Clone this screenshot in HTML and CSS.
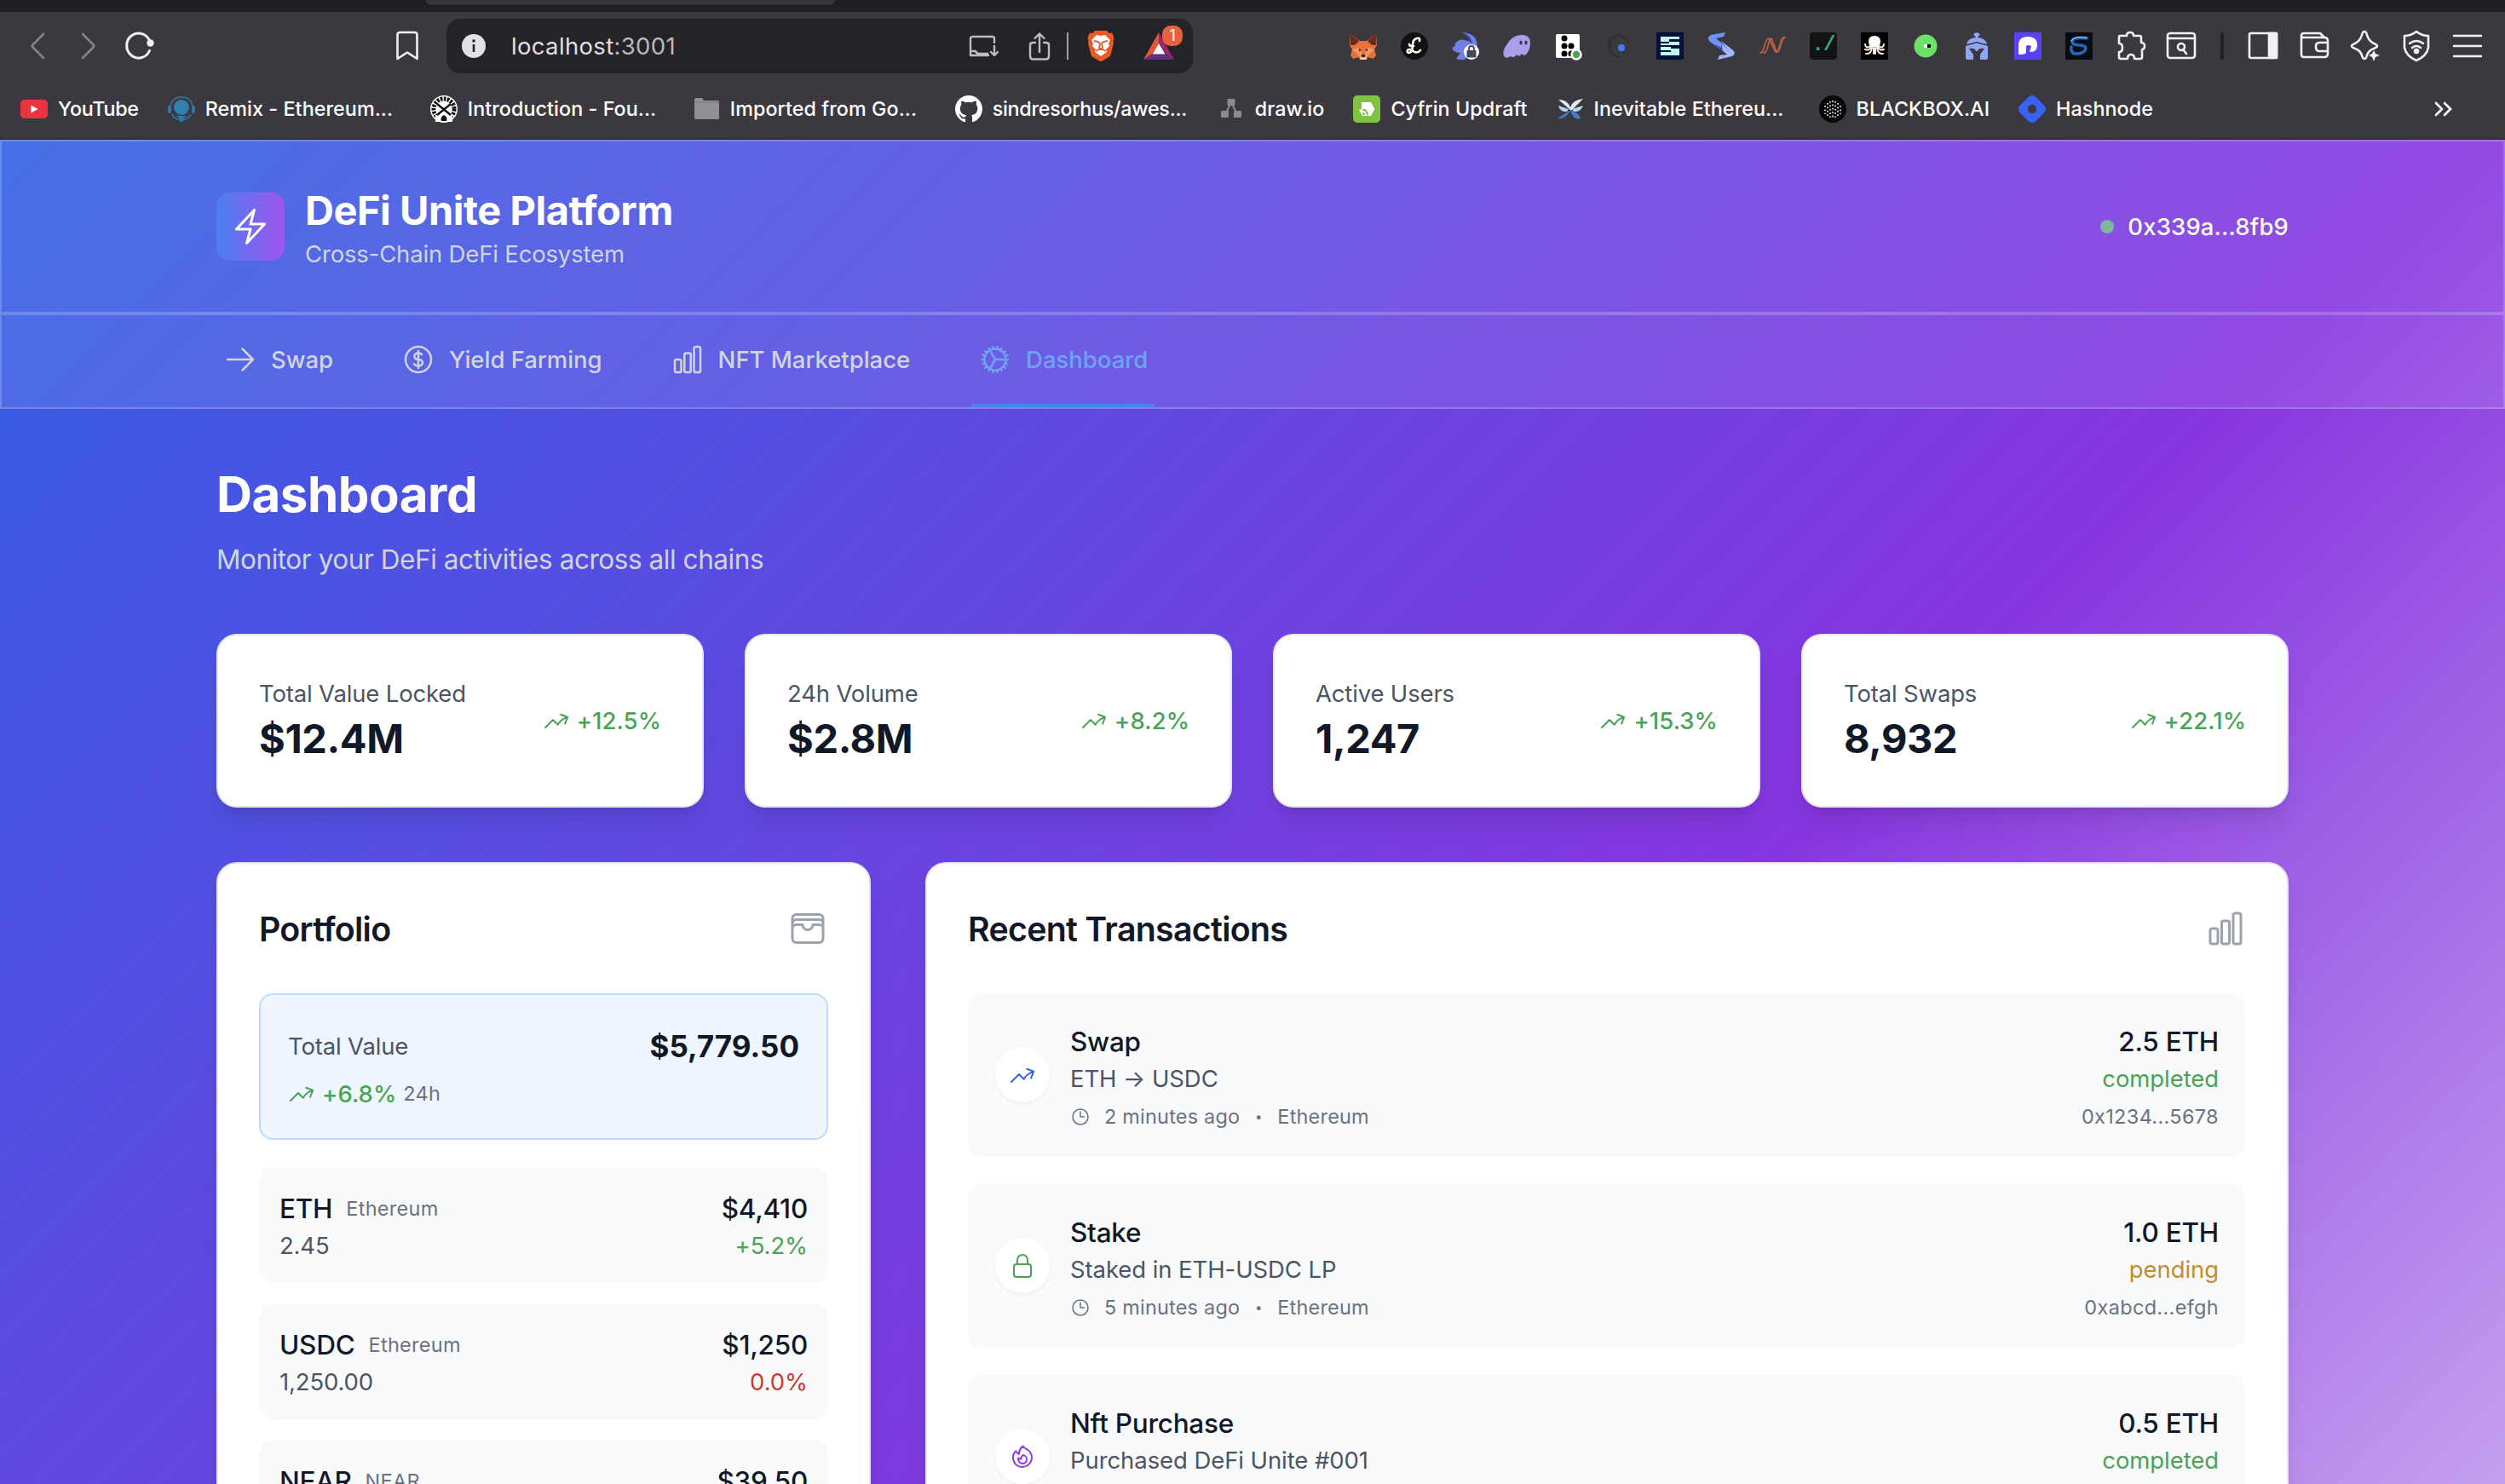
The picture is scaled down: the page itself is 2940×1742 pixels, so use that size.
FILE: index.html
```html
<!DOCTYPE html>
<html lang="en">
<head>
    <meta charset="UTF-8">
    <title>DeFi Unite Platform</title>
    <link rel="stylesheet" href="styles.css">
</head>
<body>
    <!-- shared outline icons -->
    <svg class="sprite" aria-hidden="true">
        <symbol id="i-bolt" viewBox="0 0 24 24"><path d="M3.75 13.5l10.5-11.25L12 10.5h8.25L9.75 21.75 12 13.5H3.75z"/></symbol>
        <symbol id="i-arrow" viewBox="0 0 24 24"><path d="M13.5 4.5 21 12m0 0-7.5 7.5M21 12H3"/></symbol>
        <symbol id="i-dollar" viewBox="0 0 24 24"><path d="M12 6v12m-3-2.818.879.659c1.171.879 3.07.879 4.242 0 1.172-.879 1.172-2.303 0-3.182C13.536 12.219 12.768 12 12 12c-.725 0-1.45-.22-2.003-.659-1.106-.879-1.106-2.303 0-3.182s2.9-.879 4.006 0l.415.33M21 12a9 9 0 1 1-18 0 9 9 0 0 1 18 0Z"/></symbol>
        <symbol id="i-chart" viewBox="0 0 24 24"><path d="M3 13.125C3 12.504 3.504 12 4.125 12h2.25c.621 0 1.125.504 1.125 1.125v6.75C7.5 20.496 6.996 21 6.375 21h-2.25A1.125 1.125 0 0 1 3 19.875v-6.75ZM9.75 8.625c0-.621.504-1.125 1.125-1.125h2.25c.621 0 1.125.504 1.125 1.125v11.25c0 .621-.504 1.125-1.125 1.125h-2.25a1.125 1.125 0 0 1-1.125-1.125V8.625ZM16.5 4.125c0-.621.504-1.125 1.125-1.125h2.25C20.496 3 21 3.504 21 4.125v15.75c0 .621-.504 1.125-1.125 1.125h-2.25a1.125 1.125 0 0 1-1.125-1.125V4.125Z"/></symbol>
        <symbol id="i-cog" viewBox="0 0 24 24"><path d="M4.5 12a7.5 7.5 0 0 0 15 0m-15 0a7.5 7.5 0 1 1 15 0m-15 0H3m16.5 0H21m-1.5 0H12m-8.457 3.077 1.41-.513m14.095-5.13 1.41-.513M5.106 17.785l1.15-.964m11.49-9.642 1.149-.964M7.501 19.795l.75-1.3m7.5-12.99.75-1.3m-6.063 16.658.26-1.477m2.605-14.772.26-1.477m0 17.726-.26-1.477M10.698 4.614l-.26-1.477M16.5 19.794l-.75-1.299M7.5 4.205 12 12m6.894 5.785-1.149-.964M6.256 7.178l-1.15-.964m15.352 8.864-1.41-.513M4.954 9.435l-1.41-.514M12.002 12l-3.75 6.495"/></symbol>
        <symbol id="i-trend" viewBox="0 0 24 24"><path d="M2.25 18 9 11.25l4.306 4.306a11.95 11.95 0 0 1 5.814-5.518l2.74-1.22m0 0-5.94-2.281m5.94 2.28-2.28 5.941"/></symbol>
        <symbol id="i-wallet" viewBox="0 0 24 24"><path d="M21 12a2.25 2.25 0 0 0-2.25-2.25H15a3 3 0 1 1-6 0H5.25A2.25 2.25 0 0 0 3 12m18 0v6a2.25 2.25 0 0 1-2.25 2.25H5.25A2.25 2.25 0 0 1 3 18v-6m18 0V9M3 12V9m18 0a2.25 2.25 0 0 0-2.25-2.25H5.25A2.25 2.25 0 0 0 3 9m18 0V6a2.25 2.25 0 0 0-2.25-2.25H5.25A2.25 2.25 0 0 0 3 6v3"/></symbol>
        <symbol id="i-clock" viewBox="0 0 24 24"><path d="M12 6v6h4.5m4.5 0a9 9 0 1 1-18 0 9 9 0 0 1 18 0Z"/></symbol>
        <symbol id="i-lock" viewBox="0 0 24 24"><path d="M16.5 10.5V6.75a4.5 4.5 0 1 0-9 0v3.75m-.75 11.25h10.5a2.25 2.25 0 0 0 2.25-2.25v-6.75a2.25 2.25 0 0 0-2.25-2.25H6.75a2.25 2.25 0 0 0-2.25 2.25v6.75a2.25 2.25 0 0 0 2.25 2.25Z"/></symbol>
        <symbol id="i-fire" viewBox="0 0 24 24"><path d="M15.362 5.214A8.252 8.252 0 0 1 12 21 8.25 8.25 0 0 1 6.038 7.047 8.287 8.287 0 0 0 9 9.601a8.983 8.983 0 0 1 3.361-6.867 8.21 8.21 0 0 0 3 2.48Z"/><path d="M12 18a3.75 3.75 0 0 0 .495-7.468 5.99 5.99 0 0 0-1.925 3.547 5.975 5.975 0 0 1-2.133-1.001A3.75 3.75 0 0 0 12 18Z"/></symbol>
    </svg>

    <!-- browser chrome -->
    <div class="browser">
        <div class="tab-strip"><div class="tab-stub"></div></div>
        <div class="toolbar">
            <div class="tool dim"><svg viewBox="0 0 32 32"><path d="M23 2 10.5 14.5q-1.5 1.5 0 3L23 30"/></svg></div>
            <div class="tool dim"><svg viewBox="0 0 32 32"><path d="M9 2l12.500 12.500q1.500 1.500 0 3L9 30"/></svg></div>
            <div class="tool"><svg viewBox="0 0 32 32"><path d="M27.500 21.500A14 14.500 0 1 1 28 11" stroke-width="3"/><circle cx="28.500" cy="12.500" r="4.200" fill="#f1f0f4" stroke="none"/></svg></div>
            <div class="tool save"><svg viewBox="0 0 32 32"><path d="M4.500 3q0-3 3-3h17q3 0 3 3v28L16 23.500 4.500 31Z"/></svg></div>
            <div class="url">
                <svg class="info" viewBox="0 0 28 28"><circle cx="14" cy="14" r="14" fill="#e3e1e8"/><circle cx="14" cy="8" r="1.800" fill="#242328"/><path d="M14 12v9" stroke="#242328" stroke-width="2.600"/></svg>
                <span class="address">localhost<span class="port">:3001</span></span>
                <svg class="url-icon" viewBox="0 0 36 36"><path d="M31 14V9.500Q31 7 28.500 7H6Q3 7 3 9.500V29h21M3 24h6q1 3 4 3h10M31 18v10.500M27 25l4 4 4-4"/></svg>
                <svg class="url-icon share" viewBox="0 0 32 36"><path d="M11 14H8.500Q5 14 5 17v13q0 3.500 3.500 3.500h15Q27 33.500 27 30V17q0-3-3.500-3H21M16 25V4M10.500 9 16 3.500 21.500 9"/></svg>
                <span class="url-sep"></span>
                <svg class="lion" viewBox="0 0 32 36"><path d="M9 0h14l3 3 3-.5L31.500 8l-1 4 .5 3-4 15-11 6.500L5 30 1 15l.5-3-1-4L3 2.500 6 3Z" fill="#ea5a24"/><path d="M16 6l5-1 6 6-2 4 1 3-4 4 1 3-7 5-7-5 1-3-4-4 1-3-2-4 6-6Z" fill="#fff"/><path d="M8 12l5 1 2 2-1 5 2 2 2-2-1-5 2-2 5-1M10 24l6-3 6 3" fill="none" stroke="#ea5a24" stroke-width="1.800"/></svg>
                <div class="bat">
                    <svg viewBox="0 0 36 32"><path d="M18 0 0 32l10-6.500L18 13Z" fill="#ee5330"/><path d="M18 0l18 32-10-6.500L18 13Z" fill="#99286a"/><path d="M0 32l10-6.500h16L36 32Z" fill="#5f3088"/><path d="M18 13l7.500 12.500h-15Z" fill="#fff"/></svg>
                    <span class="badge">1</span>
                </div>
            </div>

            <div class="extensions">
                <div class="tool"><svg viewBox="0 0 32 32" class="fill"><path d="M1 2l11 8h8L31 2l1 13-3 5 2 7-3 4-7-2-3 3h-4l-3-3-7 2-3-4 2-7-3-5Z" fill="#e8703a"/><path d="M1 2l10 8-5 5-5 0ZM31 2 21 10l5 5 5 0Z" fill="#6b2a1c"/><path d="M3 20l8-2 5 10 5-10 8 2-7 6-2 6h-8l-2-6Z" fill="#f5955f"/><path d="M11 19l3 2-3 1ZM21 19l-3 2 3 1ZM13.500 26h5l-1 3h-3Z" fill="#26272d"/><path d="M12 29l2 3h4l2-3-2 1h-4Z" fill="#ece4df"/></svg></div>
                <div class="tool"><svg viewBox="0 0 32 32" class="fill"><circle cx="16" cy="16" r="16" fill="#121110"/><path d="M22 10q1-4-3-3-5 1-5 8 0 8-4 9-3 0-2-3 2-2 5 0 6 5 10 0M10 14q1 3 5 2" fill="none" stroke="#fff" stroke-width="2.600"/></svg></div>
                <div class="tool"><svg viewBox="0 0 32 32" class="fill"><path d="M12 0q18 1 18 17l-9 5q-1 7-7 10-7 0-9-1l5-7Q2 24 0 18q4-1 4-5 5-8 17-2-1-6-9-11Z" fill="#717fe8"/><path d="M12 0q10 3 12 13l-3-2q-1-6-9-11Z" fill="#4434ac"/><circle cx="23" cy="23" r="9" fill="#fff"/><rect x="17.500" y="21" width="11" height="8.500" rx="1" fill="#41485e"/><path d="M20 21v-2q0-3 3-3t3 3v2" fill="none" stroke="#41485e" stroke-width="1.800"/></svg></div>
                <div class="tool"><svg viewBox="0 0 32 32" class="fill"><path d="M2 29q-4-5 2-14Q11 3 22 3q10 0 10 9 0 9-5 14-3 2-5-1-3 5-6 1-3 5-7 2-4 3-7 1Z" fill="#ab9fec"/><ellipse cx="21" cy="12" rx="1.600" ry="2.600" fill="#3a383e"/><ellipse cx="27" cy="12" rx="1.600" ry="2.600" fill="#3a383e"/></svg></div>
                <div class="tool"><svg viewBox="0 0 32 32" class="fill"><rect x="2" y="2" width="28" height="28" rx="2" fill="#fff"/><g fill="#000"><circle cx="12" cy="7" r="3.500"/><circle cx="12" cy="16" r="3.500"/><circle cx="20" cy="16" r="3.500"/><circle cx="12" cy="25" r="3.500"/><circle cx="20" cy="25" r="3.500"/></g><circle cx="26" cy="26" r="5.500" fill="#4ca154" stroke="#fff"/></svg></div>
                <div class="tool"><svg viewBox="0 0 32 32" class="fill"><path d="M27 9 16 3 5 9v14l11 6" fill="none" stroke="#2f2e33" stroke-width="3" stroke-dasharray="8 2"/><circle cx="19" cy="18" r="4.200" fill="#3f7bf2"/></svg></div>
                <div class="tool"><svg viewBox="0 0 32 32" class="fill"><path d="M0 0h32v32H0Z" fill="#03103a"/><path d="M5 5h22v3H15v3h12v4H5ZM5 17h22v10H5v-4h12v-2H5Z" fill="#bdf8f3"/><path d="M5 11h10v2H5ZM17 17h10v2H17Z" fill="#03103a"/></svg></div>
                <div class="tool"><svg viewBox="0 0 32 32" class="fill"><path d="M21 0 4 3Q-2 6 3 11l15 11L16 12l-6-5 9-2Z" fill="#6f94f4"/><path d="M12 32l17-4q5-3 1-7L16 10v10l7 6-9 1Z" fill="#a2b7f8"/><path d="M7 13l11 9L16 12l8 8-8-10v8Z" fill="#2746e6"/></svg></div>
                <div class="tool"><svg viewBox="0 0 32 32" class="fill"><path d="M2 24q3 0 5-8t5-9l8 16q3 1 5-8t5-9M6 24q3 0 5-8t4-9l6 16q3 0 5-8t5-9" fill="none" stroke="#b95f44" stroke-width="1.800"/></svg></div>
                <div class="tool"><span class="slash">./</span></div>
                <div class="tool"><svg viewBox="0 0 32 32" class="fill"><path d="M0 0h32v32H0Z" fill="#000"/><path d="M16 4q7 0 7 7 0 3-2 6H11q-2-3-2-6 0-7 7-7Z" fill="#fff"/><path d="M11 16q-5 4-6-2M21 16q5 4 6-2M12 17q-2 5-7 3M20 17q2 5 7 3M13 18q-1 8-7 7M19 18q1 8 7 7M15 18v7M17 18v7" fill="none" stroke="#fff3ec" stroke-width="2"/></svg></div>
                <div class="tool"><svg viewBox="0 0 32 32" class="fill"><circle cx="16" cy="16" r="13.500" fill="#6fe069"/><path d="M14 14h4v4h-4Z" fill="#fff"/><path d="M18 14h4v4h-4Z" fill="#000"/></svg></div>
                <div class="tool"><svg viewBox="0 0 32 32" class="fill"><path d="M12 2l4-2 4 2-3 4h-2Z" fill="#8ea6f8"/><path d="M4 14Q6 6 16 6t12 8L16 11Z" fill="#8ea6f8"/><path d="M3 16l13-3.500L29 16v14q0 2-3 2h-6V26l5-7q-7-1-8 3h-2q-1-4-8-3l5 7v6H6q-3 0-3-2Z" fill="#8ea6f8"/></svg></div>
                <div class="tool"><svg viewBox="0 0 32 32" class="fill"><path d="M0 0h32v32H0Z" fill="#5842f8"/><path d="M5 26V15Q5 5 16 5t11 10q0 8-8 8h-1l2-7q-7-3-6 3v5q-1 2-9 2Z" fill="#fff"/></svg></div>
                <div class="tool"><svg viewBox="0 0 32 32" class="fill"><path d="M0 0h32v32H0Z" fill="#080b12"/><path d="M25 7Q10 5 8 10q0 5 8 5t8 4q-2 7-14 6-4-3-3-8" fill="none" stroke="#2268b4" stroke-width="3.600"/><path d="M25 6Q10 4 7 10" fill="none" stroke="#7bbcf6" stroke-width="1.500"/></svg></div>
                <div class="tool"><svg viewBox="0 0 32 32" class="big"><path d="M4 4h8q0-4 4-4t4 4h7q2 0 2 2v6q4 0 4 4t-3 4v9q0 2-2 2h-7q0-5-4-5t-4 5H5q-2 0-2-2v-6q4 0 4-5t-4-5V6q0-2 1-2Z"/></svg></div>
                <div class="tool"><svg viewBox="0 0 32 32"><rect x="0" y="1" width="32" height="29" rx="3"/><path d="M0 7h32M18 20l4 5"/><circle cx="16" cy="17" r="4"/></svg></div>
            </div>
            <span class="tool-sep"></span>
            <div class="system">
                <div class="tool"><svg viewBox="0 0 32 32"><rect x="0" y="1" width="32" height="29" rx="2"/><path d="M23 1h9v29h-9Z" fill="#f1f0f4"/></svg></div>
                <div class="tool"><svg viewBox="0 0 32 32"><path d="M1 4q0-3 3-3h19l5 5M1 4q0 2 3 2h24q4 0 4 4v15q0 4-4 4H4q-3 0-3-3ZM32 12H22q-4 0-4 5t4 5h10"/></svg></div>
                <div class="tool"><svg viewBox="0 0 32 32" class="big"><path d="M15-1q2 0 3 4 2 7 8 10 4 1.500 4 3t-4 3q-6 2-8 8-1 4-3 4t-3-4q-2-6-8-8-4-1.500-4-3t4-3q6-3 8-10 1-4 3-4Z"/><path d="M26 21l2 4 5 2-5 2-2 5-2-5-4-2 4-2Z" fill="#f1f0f4" stroke="none"/></svg></div>
                <div class="tool"><svg viewBox="0 0 32 32"><path d="M16-1q6 5 14 5v14q-2 10-14 15Q4 28 2 18V4q8 0 14-5Z"/><path d="M8 13q8-6 16 0M11 18q5-4 10 0"/><circle cx="16" cy="22" r="2" fill="#f1f0f4"/></svg></div>
                <div class="tool"><svg viewBox="0 0 32 32"><path d="M0 4h32M0 16h32M0 28h32"/></svg></div>
            </div>
        </div>

        <div class="bookmarks">
            <div class="bookmark tight"><svg viewBox="0 0 32 32"><rect y="5" width="32" height="22" rx="5" fill="#ea3440"/><path d="M12.500 11.500v9l8-4.500Z" fill="#fff"/></svg>YouTube</div>
            <div class="bookmark wide"><svg viewBox="0 0 32 32"><path d="M16 28l-7-4h14ZM16 32l-5-5h10Z" fill="#2d79a8"/><path d="M3 14Q4 2 16 2t13 12" fill="none" stroke="#2d79a8" stroke-width="1.600"/><rect x="0" y="12" width="4" height="9" rx="2" fill="#2d79a8"/><rect x="28" y="12" width="4" height="9" rx="2" fill="#2d79a8"/><path d="M5 22q2 5 7 6M27 22q-2 5-7 6" fill="none" stroke="#2d79a8" stroke-width="1.600"/><circle cx="16" cy="14" r="9" fill="#357fae"/></svg>Remix - Ethereum...</div>
            <div class="bookmark wide"><svg viewBox="0 0 32 32"><circle cx="16" cy="16" r="16" fill="#fff"/><circle cx="16" cy="16" r="12" fill="none" stroke="#111" stroke-width="5" stroke-dasharray="2.600 1.400"/><path d="M6 23h20v8H6Z" fill="#fff"/><circle cx="16" cy="17" r="9.500" fill="#fff"/><path d="M8 10l16 13M24 10 8 23" stroke="#111" stroke-width="2.400"/><path d="M13 30q-2-4 3-7 5 3 3 7Z" fill="#111"/></svg>Introduction - Fou...</div>
            <div class="bookmark wide"><svg viewBox="0 0 32 32"><path d="M2 5q0-2 2-2h7l2 3h16q2 0 2 2v18q0 2-2 2H4q-2 0-2-2Z" fill="#8f9096"/><path d="M2 8h29" stroke="#77787d"/></svg>Imported from Go...</div>
            <div class="bookmark wide tight"><svg viewBox="0 0 16 16"><path fill="#fff" d="M8 0C3.580 0 0 3.580 0 8c0 3.540 2.290 6.530 5.470 7.590.4.070.55-.17.55-.38 0-.19-.01-.82-.01-1.490-2.010.37-2.530-.49-2.690-.94-.09-.23-.48-.94-.82-1.130-.28-.15-.68-.52-.01-.53.63-.01 1.080.58 1.230.82.72 1.210 1.870.87 2.330.66.070-.52.28-.87.51-1.070-1.780-.2-3.640-.89-3.640-3.950 0-.87.31-1.590.82-2.150-.08-.2-.36-1.020.08-2.120 0 0 .67-.21 2.200.82.64-.18 1.320-.27 2-.27s1.360.09 2 .27c1.530-1.040 2.200-.82 2.200-.82.44 1.100.16 1.920.08 2.120.51.56.82 1.270.82 2.150 0 3.070-1.870 3.750-3.650 3.950.29.25.54.73.54 1.480 0 1.070-.01 1.930-.01 2.200 0 .21.15.46.55.38A8.010 8.010 0 0 0 16 8c0-4.420-3.580-8-8-8Z"/></svg>sindresorhus/awes...</div>
            <div class="bookmark"><svg viewBox="0 0 32 32"><path d="M16 8 9 22M16 8l7 14" stroke="#8b8b8b" stroke-width="2"/><g fill="#8b8b8b"><rect x="11.500" y="4" width="9" height="8" rx="1"/><rect x="4" y="18" width="9" height="8" rx="1"/><rect x="19" y="18" width="9" height="8" rx="1"/></g></svg>draw.io</div>
            <div class="bookmark"><svg viewBox="0 0 32 32"><rect width="32" height="32" rx="5" fill="#80c342"/><path d="M10 8h11l4.500 8-4.500 8H11l-4-7 3-1Z" fill="#fff"/><path d="M11 17q5-1 6 6M11 21q2 0 2 2" fill="none" stroke="#80c342" stroke-width="2"/></svg>Cyfrin Updraft</div>
            <div class="bookmark wide"><svg viewBox="0 0 32 32"><path d="M16 17 2 5q11 0 14 9Q19 5 31 4L17 18Z" fill="#dfeaf2"/><path d="M14 16 2 12q2 8 10 7ZM18 16l13-4q-3 8-11 7Z" fill="#bcd2e4"/><path d="M15 18 1 27q8 2 15-9 4 12 12 9-1-6-12-10Z" fill="#3b7fc4"/></svg>Inevitable Ethereu...</div>
            <div class="bookmark"><svg viewBox="0 0 32 32"><circle cx="16" cy="16" r="16" fill="#050505"/><g stroke="#ddd" stroke-width="1.800" stroke-dasharray="1.800 2.600"><path d="M7 12v10M10 9v15M13 7v19M16 6v21M19 7v19M22 9v15M25 12v10"/></g></svg>BLACKBOX.AI</div>
            <div class="bookmark"><svg viewBox="0 0 32 32"><path d="M11 2.500q5-5 10 0l8.500 8.500q5 5 0 10L21 29.500q-5 5-10 0L2.500 21q-5-5 0-10Z" fill="#3762f4"/><circle cx="16" cy="16" r="5.200" fill="#3b393f"/></svg>Hashnode</div>
            <svg class="more" viewBox="0 0 22 18"><path d="M2 2l7 7-7 7M12 2l7 7-7 7"/></svg>
        </div>
    </div>

    <div class="app">
        <header class="glass header">
            <div class="container header-row">
                <div class="brand">
                    <div class="logo"><svg class="icon"><use href="#i-bolt"/></svg></div>
                    <div>
                        <div class="brand-name">DeFi Unite Platform</div>
                        <div class="brand-sub">Cross-Chain DeFi Ecosystem</div>
                    </div>
                </div>
                <div class="account"><span class="dot"></span>0x339a...8fb9</div>
            </div>
        </header>

        <nav class="glass">
            <div class="container nav-row">
                <a class="nav-item"><svg class="icon"><use href="#i-arrow"/></svg>Swap</a>
                <a class="nav-item"><svg class="icon"><use href="#i-dollar"/></svg>Yield Farming</a>
                <a class="nav-item"><svg class="icon"><use href="#i-chart"/></svg>NFT Marketplace</a>
                <a class="nav-item active"><svg class="icon"><use href="#i-cog"/></svg>Dashboard</a>
            </div>
        </nav>

        <main class="container main">
            <h1>Dashboard</h1>
            <p class="lead">Monitor your DeFi activities across all chains</p>

            <div class="stats">
                <div class="card stat">
                    <div><div class="label">Total Value Locked</div><div class="stat-value">$12.4M</div></div>
                    <div class="trend"><svg class="icon"><use href="#i-trend"/></svg>+12.5%</div>
                </div>
                <div class="card stat">
                    <div><div class="label">24h Volume</div><div class="stat-value">$2.8M</div></div>
                    <div class="trend"><svg class="icon"><use href="#i-trend"/></svg>+8.2%</div>
                </div>
                <div class="card stat">
                    <div><div class="label">Active Users</div><div class="stat-value">1,247</div></div>
                    <div class="trend"><svg class="icon"><use href="#i-trend"/></svg>+15.3%</div>
                </div>
                <div class="card stat">
                    <div><div class="label">Total Swaps</div><div class="stat-value">8,932</div></div>
                    <div class="trend"><svg class="icon"><use href="#i-trend"/></svg>+22.1%</div>
                </div>
            </div>

            <div class="panels">
                <section class="card">
                    <div class="card-head"><h2>Portfolio</h2><svg class="icon"><use href="#i-wallet"/></svg></div>
                    <div class="total">
                        <div class="row"><span class="label">Total Value</span><span class="total-value">$5,779.50</span></div>
                        <div class="trend total-trend"><svg class="icon"><use href="#i-trend"/></svg>+6.8%<span class="small">24h</span></div>
                    </div>
                    <div class="assets">
                        <div class="asset">
                            <div><div class="asset-name">ETH<span class="small">Ethereum</span></div><div class="label">2.45</div></div>
                            <div class="right"><div class="strong">$4,410</div><div class="up">+5.2%</div></div>
                        </div>
                        <div class="asset">
                            <div><div class="asset-name">USDC<span class="small">Ethereum</span></div><div class="label">1,250.00</div></div>
                            <div class="right"><div class="strong">$1,250</div><div class="down">0.0%</div></div>
                        </div>
                        <div class="asset">
                            <div><div class="asset-name">NEAR<span class="small">NEAR</span></div></div>
                            <div class="right"><div class="strong">$39.50</div></div>
                        </div>
                    </div>
                </section>

                <section class="card">
                    <div class="card-head"><h2>Recent Transactions</h2><svg class="icon"><use href="#i-chart"/></svg></div>
                    <div class="txs">
                        <div class="tx">
                            <div class="tx-icon blue"><svg class="icon"><use href="#i-trend"/></svg></div>
                            <div class="tx-body">
                                <div class="strong">Swap</div>
                                <div class="label">ETH → USDC</div>
                                <div class="meta"><svg class="icon"><use href="#i-clock"/></svg><span>2 minutes ago</span><span class="bullet">•</span><span>Ethereum</span></div>
                            </div>
                            <div class="right"><div class="strong">2.5 ETH</div><div class="up">completed</div><div class="hash">0x1234...5678</div></div>
                        </div>
                        <div class="tx">
                            <div class="tx-icon green"><svg class="icon"><use href="#i-lock"/></svg></div>
                            <div class="tx-body">
                                <div class="strong">Stake</div>
                                <div class="label">Staked in ETH-USDC LP</div>
                                <div class="meta"><svg class="icon"><use href="#i-clock"/></svg><span>5 minutes ago</span><span class="bullet">•</span><span>Ethereum</span></div>
                            </div>
                            <div class="right"><div class="strong">1.0 ETH</div><div class="pending">pending</div><div class="hash">0xabcd...efgh</div></div>
                        </div>
                        <div class="tx">
                            <div class="tx-icon purple"><svg class="icon"><use href="#i-fire"/></svg></div>
                            <div class="tx-body">
                                <div class="strong">Nft Purchase</div>
                                <div class="label">Purchased DeFi Unite #001</div>
                            </div>
                            <div class="right"><div class="strong">0.5 ETH</div><div class="up">completed</div></div>
                        </div>
                    </div>
                </section>
            </div>
        </main>
    </div>
</body>
</html>
```
FILE: styles.css
```css
* {
    box-sizing: border-box;
}
body {
    margin: 0;
    height: 1742px;
    overflow: hidden;
    font-family: Inter, "Liberation Sans", sans-serif;
    font-size: 27.5px;
    line-height: 40px;
    letter-spacing: -0.006em;
    color: #111827;
}
h1, h2, p {
    margin: 0;
}
.sprite {
    display: none;
}
.icon {
    flex: none;
    width: 32px;
    height: 32px;
    fill: none;
    stroke: currentColor;
    stroke-width: 1.5;
    stroke-linecap: round;
    stroke-linejoin: round;
}

/* browser chrome */
.browser {
    height: 164px;
    background: #3b393f;
    border-bottom: 2px solid #2e2d32;
}
.tab-strip {
    height: 14px;
    background: #1f1e23;
}
.tab-stub {
    width: 480px;
    height: 6px;
    margin-left: 500px;
    background: #37353b;
    border-radius: 0 0 12px 12px;
}
.toolbar {
    display: flex;
    align-items: center;
    height: 80px;
    padding-left: 14px;
}
.tool {
    display: flex;
    flex: none;
    align-items: center;
    justify-content: center;
    width: 60px;
}
.tool svg {
    width: 32px;
    height: 32px;
    overflow: visible;
    fill: none;
    stroke: #f1f0f4;
    stroke-width: 2.6;
    stroke-linecap: round;
    stroke-linejoin: round;
}
.tool svg.fill {
    stroke: none;
}
.tool.dim svg {
    stroke: #86848a;
}
.save {
    margin: 0 16px 0 254px;
}
.url {
    display: flex;
    flex: none;
    align-items: center;
    width: 876px;
    height: 64px;
    padding: 0 22px 0 18px;
    background: #242328;
    border-radius: 16px;
}
.info {
    width: 28px;
    height: 28px;
}
.address {
    flex: 1;
    margin-left: 30px;
    color: #e0dfe3;
    letter-spacing: 0.012em;
}
.port {
    color: #bab9be;
}
.url-icon {
    width: 36px;
    height: 36px;
    margin-right: 32px;
    fill: none;
    stroke: #bdbcc1;
    stroke-width: 2.4;
    stroke-linecap: round;
    stroke-linejoin: round;
}
.share {
    width: 32px;
    margin-right: 16px;
}
.url-sep {
    width: 2px;
    height: 32px;
    margin-right: 22px;
    background: #a3a2a8;
}
.lion {
    width: 32px;
    height: 36px;
    margin-right: 34px;
}
.bat {
    position: relative;
    width: 36px;
    height: 32px;
}
.bat svg {
    display: block;
    width: 36px;
    height: 32px;
}
.badge {
    position: absolute;
    top: -8px;
    right: -10px;
    width: 24px;
    height: 24px;
    border-radius: 10px;
    background: #e8613d;
    color: #fff;
    font-size: 18px;
    line-height: 24px;
    text-align: center;
}
.extensions {
    display: flex;
    margin-left: 170px;
}
.slash {
    width: 32px;
    height: 32px;
    border-radius: 4px;
    background: #121314;
    color: #3fae70;
    font: 700 24px/30px "Liberation Mono", monospace;
    letter-spacing: -1px;
    text-align: center;
}
.tool-sep {
    width: 4px;
    height: 32px;
    margin: 0 16px;
    border-radius: 2px;
    background: #222126;
}
.system {
    display: flex;
}
.bookmarks {
    display: flex;
    align-items: center;
    height: 68px;
    padding-left: 24px;
    color: #fff;
    font-size: 23.3px;
    font-weight: 500;
    letter-spacing: 0.003em;
}
.bookmark {
    display: flex;
    align-items: center;
    margin-right: 34px;
    white-space: nowrap;
}
.bookmark.wide {
    width: 308px;
    margin-right: 0;
}
.bookmark.tight {
    letter-spacing: -0.012em;
}
.bookmark svg {
    flex: none;
    width: 32px;
    height: 32px;
    margin-right: 12px;
}
.more {
    width: 22px;
    height: 18px;
    margin-left: auto;
    margin-right: 61px;
    fill: none;
    stroke: #fff;
    stroke-width: 2.6;
    stroke-linecap: round;
}

/* app */
.app {
    height: 1578px;
    overflow: hidden;
    background: linear-gradient(135deg, #325fe4 0%, #8636df 50%, #f8f8fc 100%) no-repeat;
    background-size: 100% 2912px;
}
.container {
    width: 2560px;
    margin: 0 auto;
    padding: 0 64px;
}
.glass {
    background: rgba(255, 255, 255, 0.1);
    border: 2px solid rgba(255, 255, 255, 0.2);
}
.header {
    height: 204px;
    padding: 48px 0;
}
.header-row, .brand, .account, .nav-row, .nav-item, .stat, .trend, .card-head, .row, .asset, .asset-name, .tx, .meta {
    display: flex;
    align-items: center;
}
.header-row, .stat, .card-head, .row, .asset {
    justify-content: space-between;
}
.logo {
    display: flex;
    align-items: center;
    justify-content: center;
    width: 80px;
    height: 80px;
    margin-right: 24px;
    border-radius: 16px;
    background: linear-gradient(to right, #4a7ff0, #a154ee);
    color: #fff;
}
.logo .icon {
    width: 48px;
    height: 48px;
}
.brand-name {
    margin-bottom: -2px;
    color: #fff;
    font-size: 47px;
    font-weight: 700;
    line-height: 66px;
    letter-spacing: -0.01em;
}
.brand-sub {
    color: #d1d5db;
}
.account {
    color: #fff;
    font-weight: 540;
    letter-spacing: 0.005em;
}
.dot {
    width: 16px;
    height: 16px;
    margin-right: 16px;
    border-radius: 50%;
    background: #7cb89e;
}
.nav-row {
    gap: 64px;
}
.nav-item {
    gap: 16px;
    padding: 32px 8px;
    border-bottom: 4px solid transparent;
    color: #d1d5db;
    font-weight: 530;
    letter-spacing: -0.001em;
}
.nav-item .icon {
    width: 40px;
    height: 40px;
}
.nav-item.active {
    color: #6fa4f4;
    border-color: #4a84f0;
}
.main {
    padding-top: 64px;
}
h1 {
    color: #fff;
    font-size: 58.2px;
    line-height: 72px;
    letter-spacing: -0.008em;
}
.lead {
    margin: 16px 0 62px;
    color: #d1d5db;
    font-size: 31.5px;
    line-height: 50px;
    letter-spacing: -0.014em;
}
.stats {
    display: grid;
    grid-template-columns: repeat(4, 1fr);
    gap: 48px;
    margin-bottom: 64px;
}
.card {
    padding: 48px;
    border: 2px solid #e5e7eb;
    border-radius: 24px;
    background: #fff;
    box-shadow: 0 20px 30px -6px rgba(0, 0, 0, 0.1), 0 8px 12px -8px rgba(0, 0, 0, 0.1);
}
.label {
    color: #4b5563;
}
.stat-value {
    margin-bottom: -2px;
    font-size: 47px;
    font-weight: 700;
    line-height: 66px;
    letter-spacing: -0.008em;
}
.trend {
    gap: 8px;
    color: #4aa257;
    font-weight: 540;
    letter-spacing: 0.002em;
}
.panels {
    display: grid;
    grid-template-columns: 768px 1600px;
    gap: 64px;
}
.card-head {
    margin-bottom: 48px;
}
.card-head .icon {
    width: 48px;
    height: 48px;
    color: #9ca3af;
}
h2 {
    margin-bottom: -2px;
    font-size: 39.3px;
    font-weight: 620;
    line-height: 58px;
    letter-spacing: -0.018em;
}
.total {
    height: 172px;
    padding: 32px;
    border: 2px solid #c0dafb;
    border-radius: 16px;
    background: #eff6ff;
}
.total-value {
    font-size: 35px;
    font-weight: 700;
    line-height: 56px;
    letter-spacing: 0;
}
.total-trend {
    margin-top: 8px;
}
.small {
    color: #6b7280;
    font-size: 23.5px;
    font-weight: 400;
    line-height: 32px;
    letter-spacing: 0.012em;
}
.assets {
    display: flex;
    flex-direction: column;
    gap: 24px;
    margin-top: 32px;
}
.asset {
    height: 136px;
    padding: 24px;
    border-radius: 16px;
    background: #f9fafb;
    align-items: flex-start;
}
.asset-name {
    gap: 16px;
}
.asset-name, .strong {
    margin-bottom: -2px;
    font-size: 31.5px;
    font-weight: 530;
    line-height: 50px;
    letter-spacing: -0.008em;
}
.right {
    text-align: right;
}
.right .up, .right .down, .right .pending {
    letter-spacing: -0.003em;
}
.up {
    color: #4aa257;
}
.down {
    color: #cb3a31;
}
.pending {
    color: #c28d2e;
}
.txs {
    display: flex;
    flex-direction: column;
    gap: 32px;
}
.tx {
    height: 192px;
    padding: 32px;
    border-radius: 16px;
    background: #f9fafb;
}
.tx-icon {
    display: flex;
    width: 64px;
    height: 64px;
    margin-right: 24px;
    padding: 16px;
    border-radius: 50%;
    background: #fff;
    box-shadow: 0 2px 4px rgba(0, 0, 0, 0.05);
}
.blue {
    color: #3b63e6;
}
.green {
    color: #4aa257;
}
.purple {
    color: #8b3be0;
}
.tx-body {
    flex: 1;
}
.tx-body .label {
    letter-spacing: -0.003em;
}
.tx-body, .tx .right {
    height: 128px;
}
.meta, .hash {
    margin-top: 9px;
    color: #6b7280;
    font-size: 23.5px;
    line-height: 32px;
    letter-spacing: 0.008em;
}
.hash {
    letter-spacing: 0.014em;
}
.meta {
    gap: 16px;
}
.bullet {
    width: 12px;
    font-size: 15px;
    text-align: center;
}
.meta .icon {
    width: 24px;
    height: 24px;
}
```
